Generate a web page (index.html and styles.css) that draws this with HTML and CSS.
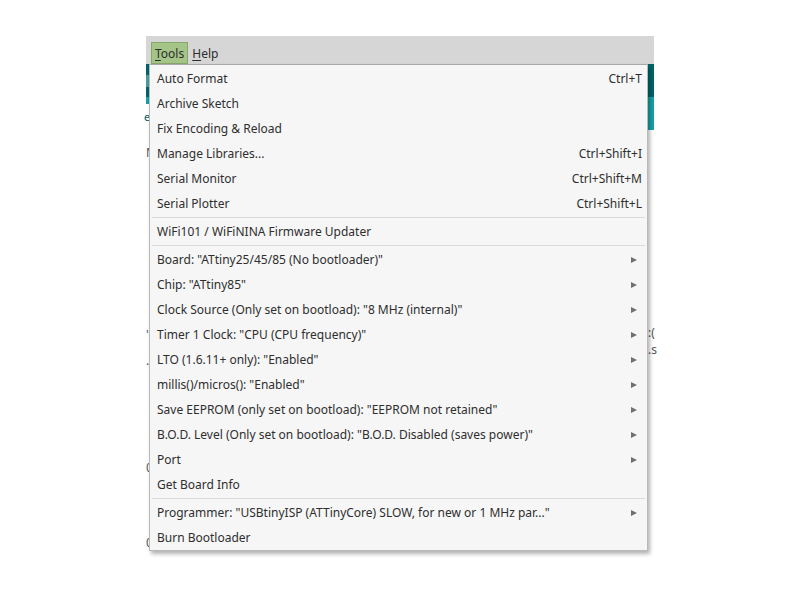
FILE: index.html
```html
<!DOCTYPE html>
<html lang="en">
<head>
    <meta charset="UTF-8">
    <title>Arduino - Tools menu</title>
    <link rel="stylesheet" href="styles.css">
</head>
<body>
<div class="window">
    <div class="menubar">
        <span class="menubar-item active"><u>T</u>ools</span>
        <span class="menubar-item"><u>H</u>elp</span>
    </div>
    <div class="toolbar">
        <span class="tool-btn"></span>
    </div>
    <div class="tabs">
        <div class="tab">e(</div>
    </div>
    <div class="editor">
        <div class="line">N</div>
        <div class="line"></div>
        <div class="line"></div>
        <div class="line"></div>
        <div class="line"></div>
        <div class="line"></div>
        <div class="line"></div>
        <div class="line">'<span class="right">:(</span></div>
        <div class="line">.<span class="right up">.s</span></div>
        <div class="line"></div>
        <div class="line"></div>
        <div class="line"></div>
        <div class="line low">0,</div>
        <div class="line"></div>
        <div class="line"></div>
        <div class="line">0,</div>
    </div>

    <!-- dropdown menu -->
    <div class="dropdown">
        <div class="item"><span>Auto Format</span><span class="key">Ctrl+T</span></div>
        <div class="item"><span>Archive Sketch</span></div>
        <div class="item"><span>Fix Encoding &amp; Reload</span></div>
        <div class="item"><span>Manage Libraries...</span><span class="key">Ctrl+Shift+I</span></div>
        <div class="item"><span>Serial Monitor</span><span class="key">Ctrl+Shift+M</span></div>
        <div class="item"><span>Serial Plotter</span><span class="key">Ctrl+Shift+L</span></div>
        <div class="sep"></div>
        <div class="item"><span>WiFi101 / WiFiNINA Firmware Updater</span></div>
        <div class="sep"></div>
        <div class="item sub"><span>Board: "ATtiny25/45/85 (No bootloader)"</span></div>
        <div class="item sub"><span>Chip: "ATtiny85"</span></div>
        <div class="item sub"><span>Clock Source (Only set on bootload): "8 MHz (internal)"</span></div>
        <div class="item sub"><span>Timer 1 Clock: "CPU (CPU frequency)"</span></div>
        <div class="item sub"><span>LTO (1.6.11+ only): "Enabled"</span></div>
        <div class="item sub"><span>millis()/micros(): "Enabled"</span></div>
        <div class="item sub"><span>Save EEPROM (only set on bootload): "EEPROM not retained"</span></div>
        <div class="item sub"><span>B.O.D. Level (Only set on bootload): "B.O.D. Disabled (saves power)"</span></div>
        <div class="item sub"><span>Port</span></div>
        <div class="item"><span>Get Board Info</span></div>
        <div class="sep"></div>
        <div class="item sub"><span>Programmer: "USBtinyISP (ATTinyCore) SLOW, for new or 1 MHz par..."</span></div>
        <div class="item"><span>Burn Bootloader</span></div>
    </div>
</div>
</body>
</html>
```

FILE: styles.css
```css
:root {
    --bar-bg: #d6d6d6;
    --menu-bg: #f6f6f6;
    --text-color: #2e2e2e;
    --teal-dark: #006468;
    --teal-light: #17a1a5;
    --sep-color: #dadada;
}

* {
    margin: 0;
    padding: 0;
    box-sizing: border-box;
}

html, body {
    min-height: 600px;
}

body {
    background: #fff;
    font-family: 'Noto Sans', 'Open Sans', sans-serif;
    font-size: 12px;
    color: var(--text-color);
}

.window {
    position: relative;
    width: 508px;
    margin: 36px 0 0 146px;
}

.menubar {
    height: 28px;
    background: var(--bar-bg);
    display: flex;
    align-items: flex-start;
    padding: 6px 0 0 5px;
}

.menubar-item {
    padding: 0 3px;
    height: 22px;
    line-height: 21px;
    border: 1px solid transparent;
}

.menubar-item.active {
    background: #a4c488;
    border-color: #86a96a;
}

.menubar-item u {
    text-decoration-thickness: 1px;
    text-underline-offset: 2px;
}

.toolbar {
    height: 33px;
    padding: 11px 0 0 0;
    background: var(--teal-dark);
}

.tool-btn {
    display: block;
    width: 6px;
    height: 12px;
    background: #4a9a9c;
}

.tabs {
    height: 33px;
    padding-top: 7px;
    background: var(--teal-light);
}

.tab {
    width: 120px;
    height: 26px;
    background: #fff;
    color: var(--teal-dark);
    font-size: 11px;
    line-height: 26px;
    text-indent: -2px;
}

.editor {
    padding-top: 10px;
    color: #555;
}

.line {
    position: relative;
    height: 26px;
    line-height: 14px;
    padding-top: 6px;
}

.line.low {
    padding-top: 9px;
}

.line .right {
    position: absolute;
    left: 502px;
    top: 4px;
    white-space: nowrap;
}

.line .right.up {
    top: -5px;
}

.dropdown {
    position: absolute;
    top: 28px;
    left: 3px;
    width: 499px;
    padding: 1px 0 0;
    height: 487px;
    background: var(--menu-bg);
    border: 1px solid #b9b9b9;
    border-top-color: #a8a8a8;
    box-shadow: 2px 3px 4px rgba(0,0,0,0.3);
}

.item {
    height: 25px;
    display: flex;
    align-items: center;
    justify-content: space-between;
    padding: 0 5px 0 7px;
    white-space: nowrap;
}

.item.sub::after {
    content: '';
    margin-right: 5px;
    border-left: 6px solid #707070;
    border-top: 3px solid transparent;
    border-bottom: 3px solid transparent;
}

.sep {
    height: 3px;
    padding: 1px 2px;
}

.sep::before {
    content: '';
    display: block;
    height: 1px;
    background: var(--sep-color);
}
```
